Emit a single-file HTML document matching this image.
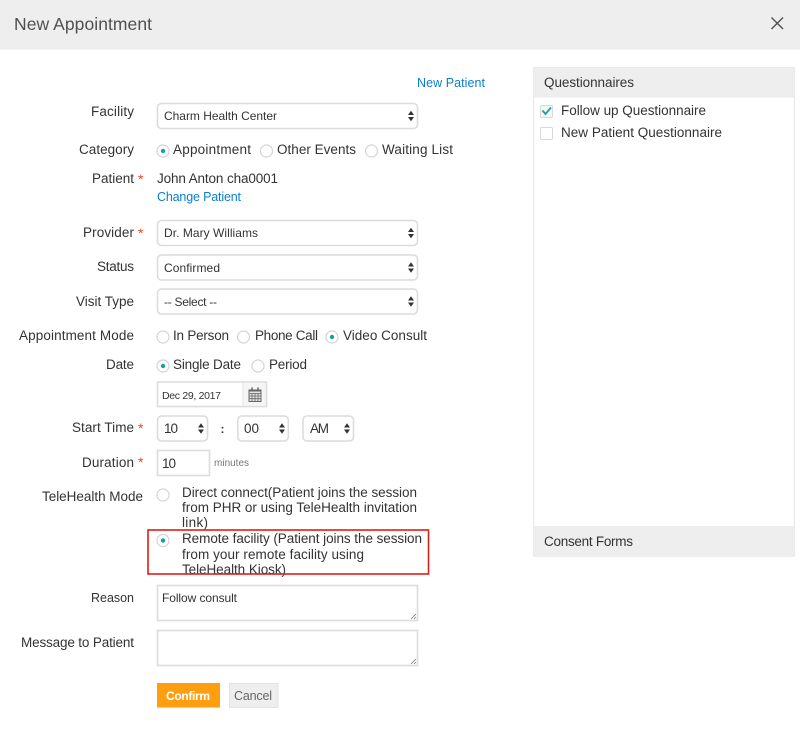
<!DOCTYPE html>
<html><head><meta charset="utf-8"><title>New Appointment</title>
<style>
html,body{margin:0;padding:0;background:#fff;width:800px;height:730px;overflow:hidden}
svg{display:block;position:absolute;left:0;top:0;filter:blur(.3px)}
text{font-family:"Liberation Sans",sans-serif;font-size:13.5px;fill:#333}
.s{font-size:12px;fill:#333}
.a{fill:#f0451e;font-size:14px}
.b{fill:#0b7fce;font-size:12.500px}
.box{fill:#fff;stroke:#dcdcdc;stroke-width:1.6}
.r{fill:#fff;stroke:#d4d4d4;stroke-width:1.2}
.d{fill:#14a39a}
</style></head><body>
<svg width="800" height="730" viewBox="0 0 800 730" xmlns="http://www.w3.org/2000/svg">
<defs>
<g id="ar"><path d="M0 -1L3 -5.2L6 -1Z M0 1L3 5.2L6 1Z" fill="#333"/></g>
<g id="ro"><circle r="6" class="r"/></g>
<g id="rc"><circle r="6" class="r"/><circle r="2.2" class="d"/></g>
</defs>

<rect x="0" y="0" width="800" height="49.5" fill="#eeeeee"/>
<text x="14" y="30" textLength="138" style="font-size:17.500px;fill:#505050">New Appointment</text>
<path d="M771.5 17.5L783 29M783 17.5L771.5 29" stroke="#555" stroke-width="1.5" fill="none"/>

<text x="417" y="87" textLength="68" class="b">New Patient</text>

<text x="91" y="116" textLength="43">Facility</text>
<rect x="157.5" y="103.5" width="260" height="25" rx="4" class="box"/>
<text x="164" y="120" textLength="113" class="s">Charm Health Center</text>
<use href="#ar" x="408" y="116"/>

<text x="79" y="154" textLength="55">Category</text>
<use href="#rc" x="163" y="151"/>
<text x="173" y="154" textLength="78">Appointment</text>
<use href="#ro" x="266.5" y="151"/>
<text x="277" y="154" textLength="79">Other Events</text>
<use href="#ro" x="371.5" y="151"/>
<text x="382" y="154" textLength="71">Waiting List</text>

<text x="92" y="183" textLength="42">Patient</text>
<text x="138" y="184" class="a">*</text>
<text x="157" y="183" textLength="121">John Anton cha0001</text>
<text x="157" y="201" textLength="84" class="b">Change Patient</text>

<text x="83" y="237" textLength="51">Provider</text>
<text x="138" y="238" class="a">*</text>
<rect x="157.5" y="220.5" width="260" height="25" rx="4" class="box"/>
<text x="164" y="237" textLength="94" class="s">Dr. Mary Williams</text>
<use href="#ar" x="408" y="233"/>

<text x="97" y="271" textLength="37">Status</text>
<rect x="157.5" y="255" width="260" height="25" rx="4" class="box"/>
<text x="164" y="272" textLength="56" class="s">Confirmed</text>
<use href="#ar" x="408" y="267.500"/>

<text x="76" y="306" textLength="58">Visit Type</text>
<rect x="157.5" y="289" width="260" height="25" rx="4" class="box"/>
<text x="164" y="306" textLength="53" class="s">-- Select --</text>
<use href="#ar" x="408" y="301.500"/>

<text x="19" y="340" textLength="115">Appointment Mode</text>
<use href="#ro" x="163" y="337"/>
<text x="173" y="340" textLength="56">In Person</text>
<use href="#ro" x="243.500" y="337"/>
<text x="255" y="340" textLength="63">Phone Call</text>
<use href="#rc" x="332" y="337"/>
<text x="343" y="340" textLength="84">Video Consult</text>

<text x="106" y="369" textLength="28">Date</text>
<use href="#rc" x="163" y="366"/>
<text x="173" y="369" textLength="68">Single Date</text>
<use href="#ro" x="258" y="366"/>
<text x="269" y="369" textLength="38">Period</text>

<rect x="157.5" y="382" width="109" height="24.500" class="box"/>
<rect x="243.500" y="382.800" width="22.200" height="23" fill="#f5f5f5"/>
<path d="M243 382V406" stroke="#e2e2e2" stroke-width="1"/>
<text x="162" y="399" textLength="59" style="font-size:10.500px">Dec 29, 2017</text>
<g fill="none" stroke="#666">
<rect x="249" y="390" width="12" height="11.500" fill="#e4e4e4"/>
<path d="M249 393.500H261M249 396H261M249 398.700H261M252 393V401M255 393V401M258 393V401" stroke-width=".8"/>
<path d="M249 390.500H261" stroke-width="2"/>
<path d="M252 387.500V390M258 387.500V390" stroke-width="1.500"/>
</g>

<text x="72" y="432" textLength="62">Start Time</text>
<text x="138" y="433" class="a">*</text>
<rect x="157.500" y="416" width="50" height="25" rx="4" class="box"/>
<text x="164" y="433" textLength="14">10</text>
<use href="#ar" x="198" y="428.500"/>
<text x="220.500" y="433" style="font-weight:bold;font-size:12px">:</text>
<rect x="237.800" y="416" width="50.500" height="25" rx="4" class="box"/>
<text x="244" y="433" textLength="15">00</text>
<use href="#ar" x="279" y="428.500"/>
<rect x="303" y="416" width="50.500" height="25" rx="4" class="box"/>
<text x="310" y="433" textLength="19">AM</text>
<use href="#ar" x="344" y="428.500"/>

<text x="82" y="467" textLength="52">Duration</text>
<text x="138" y="467" class="a">*</text>
<rect x="157.500" y="450.500" width="52" height="25" class="box"/>
<text x="162" y="468" textLength="14">10</text>
<text x="214" y="466" textLength="35" style="font-size:10px;fill:#777">minutes</text>

<text x="42" y="501" textLength="101">TeleHealth Mode</text>
<use href="#ro" x="163" y="495"/>
<text x="182" y="497" textLength="235">Direct connect(Patient joins the session</text>
<text x="182" y="512" textLength="235">from PHR or using TeleHealth invitation</text>
<text x="182" y="527" textLength="26">link)</text>
<use href="#rc" x="163" y="540.500"/>
<text x="182" y="543" textLength="240">Remote facility (Patient joins the session</text>
<text x="182" y="559" textLength="182">from your remote facility using</text>
<text x="182" y="574" textLength="104">TeleHealth Kiosk)</text>
<rect x="148" y="530" width="280.500" height="44" fill="none" stroke="#dc1f1c" stroke-width="1.600"/>

<text x="91" y="602" textLength="43" style="font-size:12.500px">Reason</text>
<rect x="157.500" y="585.500" width="260" height="35" class="box"/>
<text x="162" y="602" textLength="75" class="s">Follow consult</text>
<path d="M411 619L416 614M414 619L416 617" stroke="#777" stroke-width=".8"/>

<text x="21" y="647" textLength="113">Message to Patient</text>
<rect x="157.500" y="630.500" width="260" height="35" class="box"/>
<path d="M411 664L416 659M414 664L416 662" stroke="#777" stroke-width=".8"/>

<rect x="157" y="683" width="63" height="24.500" fill="#ff9f10"/>
<text x="166" y="700" textLength="44" style="fill:#fff;font-weight:bold;font-size:12px">Confirm</text>
<rect x="229.500" y="683.500" width="48.500" height="24" fill="#eeeeee" stroke="#e2e2e2"/>
<text x="234" y="700" textLength="38" style="fill:#666;font-size:12.500px">Cancel</text>

<rect x="533.500" y="67.500" width="261" height="489" fill="#fff" stroke="#e6e6e6"/>
<rect x="533.500" y="67.500" width="261" height="30" fill="#eeeeee"/>
<text x="544" y="87" textLength="90">Questionnaires</text>
<rect x="540.500" y="105.500" width="12" height="12" fill="#f6f6f6" stroke="#d8d8d8" rx="1"/>
<path d="M542.500 110.500L545.500 114L551 107.500" fill="none" stroke="#14a39a" stroke-width="1.800"/>
<text x="561" y="115" textLength="145">Follow up Questionnaire</text>
<rect x="540.500" y="127.500" width="12" height="12" fill="#fff" stroke="#d8d8d8" rx="1"/>
<text x="561" y="137" textLength="161">New Patient Questionnaire</text>
<rect x="533.500" y="526" width="261" height="31" fill="#eeeeee"/>
<text x="544" y="546" textLength="89">Consent Forms</text>
</svg>
</body></html>
